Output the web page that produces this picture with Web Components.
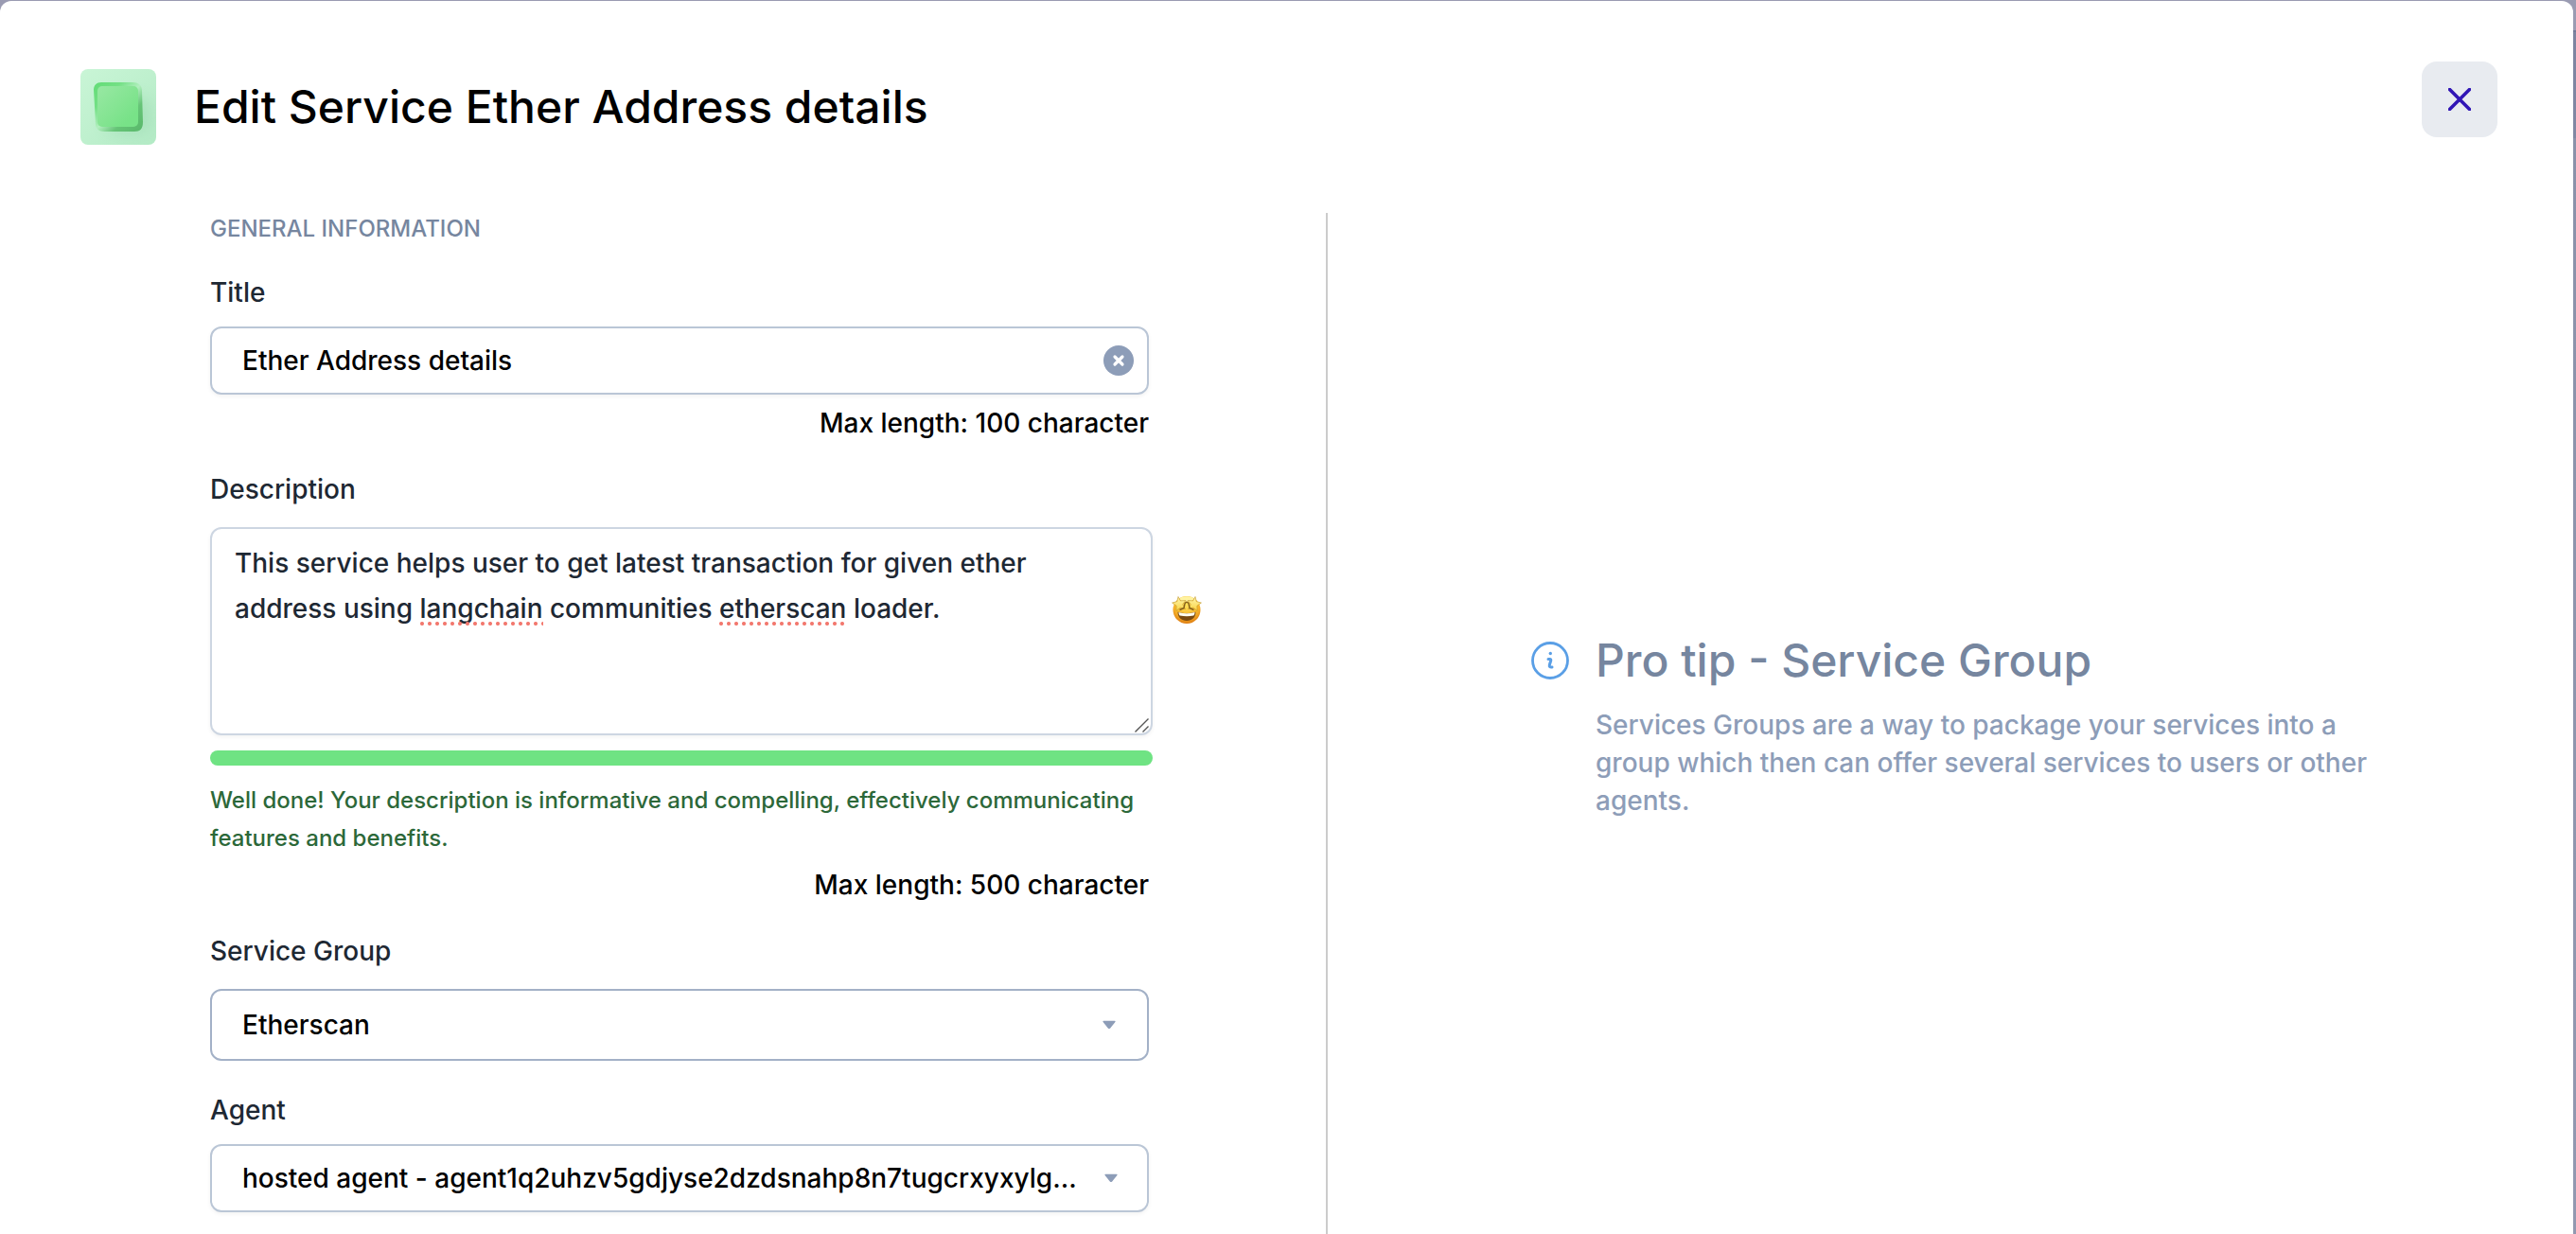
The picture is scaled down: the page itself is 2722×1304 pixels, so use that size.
<!DOCTYPE html>
<html lang="en">
<head>
<meta charset="utf-8">
<title>Edit Service</title>
<style>
  html { background: linear-gradient(#9a9bb2 0, #9a9bb2 32px, #737a97 32px, #737a97 34px, #7d84a0 34px, #8188a3 146px, #8a91a9 146px, #9298b0 100%); }
  body {
    margin: 0;
    min-height: 100vh;
    display: flex;
    font-family: Inter, "Open Sans", sans-serif;
    font-size: 28px;
    font-weight: 500;
    line-height: 40px;
    color: #000;
    --label: #1e2833;
    --muted: #76869f;
    --soft: #8d9db8;
    --line: #bac6d6;
  }
</style>
</head>
<body>
<service-dialog>
  <dialog-header slot="header">Edit Service Ether Address details</dialog-header>
  <service-form slot="form"></service-form>
  <pro-tip slot="tip" heading="Pro tip - Service Group">Services Groups are a way to package your services into a group which then can offer several services to users or other agents.</pro-tip>
</service-dialog>

<template id="dialog-tpl">
  <style>
    :host { flex: 1; display: flex; flex-direction: column; min-width: 0; margin: 1px 3px 0 0; background: #fff; border-radius: 12px 12px 0 0; }
    .body { flex: 1; display: grid; grid-template-columns: 1401fr 1318fr; }
    .tip { display: flex; align-items: center; border-left: 2px solid #ccc; }
  </style>
  <slot name="header"></slot>
  <div class="body">
    <slot name="form"></slot>
    <div class="tip"><slot name="tip"></slot></div>
  </div>
</template>

<template id="header-tpl">
  <style>
    :host { display: flex; align-items: flex-start; justify-content: space-between; padding: 64px 80px 72px 85px; }
    .lead { display: flex; align-items: center; gap: 40px; padding-top: 8px; }
    svg { display: block; }
    h1 { margin: 0; font-size: 48px; line-height: 60px; font-weight: 500; }
    button { width: 80px; height: 80px; padding: 28px; border: 0; border-radius: 16px; background: #e8ebf0; cursor: pointer; }
  </style>
  <div class="lead">
    <svg width="80" height="80" viewBox="0 0 80 80" aria-hidden="true">
      <defs>
        <linearGradient id="bg" x1="0" y1="0" x2="1" y2="1"><stop offset="0" stop-color="#c9f5d6"/><stop offset="1" stop-color="#b4ebc6"/></linearGradient>
        <linearGradient id="rim" x1="0" y1="0" x2="1" y2="1"><stop offset="0" stop-color="#62dc76"/><stop offset=".28" stop-color="#74e085"/><stop offset=".5" stop-color="#b2efbf"/><stop offset=".7" stop-color="#66c477"/><stop offset="1" stop-color="#58b86a"/></linearGradient>
        <linearGradient id="face" x1="0" y1="0" x2="1" y2="1"><stop offset="0" stop-color="#98e8a3"/><stop offset=".8" stop-color="#78e288"/><stop offset="1" stop-color="#78e288"/></linearGradient>
        <filter id="soft" x="-50%" y="-50%" width="200%" height="200%"><feGaussianBlur stdDeviation="8"/></filter>
        <clipPath id="clip"><rect width="80" height="80" rx="8"/></clipPath>
      </defs>
      <g clip-path="url(#clip)">
        <rect width="80" height="80" fill="url(#bg)"/>
        <rect x="28" y="30" width="46" height="38" rx="12" fill="#88cda2" opacity=".35" filter="url(#soft)"/>
        <path d="M22 14h33c6 0 10 3 10 9l1 33c0 7-3 10-9 10H26c-7 0-10-3-10-9L14 22c0-5 3-8 8-8z" fill="url(#rim)"/>
        <rect x="18" y="18" width="43" height="43" rx="5" fill="url(#face)"/>
      </g>
    </svg>
    <h1><slot></slot></h1>
  </div>
  <button type="button" aria-label="Close">
    <svg width="24" height="24" viewBox="0 0 24 24" fill="none" stroke="#3116b5" stroke-width="3.600" stroke-linecap="round"><path d="M1.500 1.500l21 21M22.500 1.500l-21 21"/></svg>
  </button>
</template>

<template id="form-tpl">
  <style>
    :host { display: block; padding: 0 127px 23px 222px; }
    h2 { margin: 0; font-size: 24px; line-height: 34px; font-weight: 500; text-transform: uppercase; color: var(--muted); }
    form { display: flex; flex-direction: column; }
  </style>
  <form>
    <h2>General Information</h2>
    <text-field label="Title" value="Ether Address details" hint="Max length: 100 character"></text-field>
    <description-field label="Description" hint="Max length: 500 character" flagged="langchain etherscan"
      value="This service helps user to get latest transaction for given ether address using langchain communities etherscan loader.">Well done! Your description is informative and compelling, effectively communicating features and benefits.</description-field>
    <select-field label="Service Group" value="Etherscan" tall></select-field>
    <select-field label="Agent" value="hosted agent - agent1q2uhzv5gdjyse2dzdsnahp8n7tugcrxyxylg..."></select-field>
  </form>
</template>

<template id="text-tpl">
  <style>
    :host { display: block; padding: 30px 60px 0 0; }
    label { display: block; color: var(--label); margin-bottom: 16px; }
    .box { display: flex; align-items: center; height: 68px; padding: 0 14px 0 32px; border: 2px solid var(--line); border-radius: 12px; box-shadow: 0 2px 4px #0000000d; }
    input { flex: 1; min-width: 0; border: 0; outline: 0; padding: 0; background: none; font: inherit; color: inherit; }
    button { width: 32px; height: 32px; padding: 0; border: 0; background: none; cursor: pointer; }
    svg { display: block; }
    .hint { margin: 10px 0 0; text-align: right; }
  </style>
  <label for="c"></label>
  <div class="box">
    <input id="c" type="text">
    <button type="button" aria-label="Clear"><svg width="32" height="32" viewBox="0 0 32 32"><circle cx="16" cy="16" r="16" fill="#8d9db8"/><path d="M12 12l8 8M20 12l-8 8" stroke="#fff" stroke-width="3.200" stroke-linecap="round"/></svg></button>
  </div>
  <p class="hint"></p>
</template>

<template id="description-tpl">
  <style>
    :host { display: block; padding-top: 30px; }
    label { display: block; color: var(--label); margin-bottom: 20px; }
    .row { display: flex; align-items: flex-start; gap: 20px; margin-right: 4px; }
    .area { position: relative; flex: 1; display: flex; color: var(--label); }
    textarea { flex: 1; box-sizing: border-box; height: 220px; padding: 12px 24px; border: 2px solid #cdd6e2; border-radius: 12px; background: #fff; box-shadow: 0 2px 4px #0000000d; font: inherit; line-height: 48px; color: inherit; outline: 0; resize: none; }
    .mark { position: absolute; height: 4px; background: radial-gradient(circle at 2px 2px, #f2776d 1.5px, transparent 2.5px) 0 0 / 8px 4px repeat-x; }
    .grip { position: absolute; right: 4px; bottom: 3px; }
    .face { flex: none; margin: 71px 0 0; width: 32px; height: 32px; }
    .rest { margin-right: 56px; }
    progress { display: block; appearance: none; width: 100%; height: 16px; margin-top: 16px; border: 0; border-radius: 8px; overflow: hidden; }
    progress::-webkit-progress-bar { background: #e8ebf0; }
    progress::-webkit-progress-value { background: #6fe383; }
    .note { margin: 17px 0 0; font-size: 24px; color: #2c6839; }
    .hint { margin: 9px 4px 0 0; text-align: right; }
  </style>
  <label for="c"></label>
  <div class="row">
    <div class="area">
      <textarea id="c" spellcheck="false"></textarea>
      <svg class="grip" width="15" height="15" viewBox="0 0 15 15" stroke="#555" stroke-width="1.4"><path d="M.5 14.500L14.500 .5M8.500 14.500l6-6"/></svg>
    </div>
    <svg class="face" viewBox="0 0 32 32" role="img" aria-label="Star-struck">
      <defs>
        <radialGradient id="skin" cx=".5" cy=".3" r=".75"><stop offset="0" stop-color="#ffe45c"/><stop offset=".6" stop-color="#f7b52b"/><stop offset="1" stop-color="#d9720d"/></radialGradient>
        <linearGradient id="star" x1="0" y1="0" x2="0" y2="1"><stop offset="0" stop-color="#fff6ae"/><stop offset="1" stop-color="#f8d443"/></linearGradient>
      </defs>
      <circle cx="16" cy="16.500" r="14.500" fill="url(#skin)"/>
      <ellipse cx="16" cy="5" rx="7.500" ry="2.800" fill="#fff3a0"/>
      <path d="M6.500 18.500c6 2 13 2 19 0 0 6-4 9.500-9.500 9.500s-9.500-3.500-9.500-9.500z" fill="#7a4a10"/>
      <path d="M7.500 19c6 1.600 11 1.600 17 0 0 2-.6 3-1.200 3.600-5 1-9.600 1-14.600 0C8 22 7.500 21 7.500 19z" fill="#fffdf0"/>
      <g fill="url(#star)" stroke="#c09428" stroke-width=".6" stroke-linejoin="round">
        <path d="M7 2.500l2.400 4.400 5.400-.4-3 4.200 2.600 5-5.200-1.500-4.300 3.300.2-5.300L.6 9l5.200-1.400z"/>
        <path d="M25 2.500l-2.400 4.400-5.400-.4 3 4.200-2.600 5 5.200-1.500 4.300 3.300-.2-5.300 4.500-3.200-5.200-1.400z"/>
      </g>
      <path d="M8.500 16.500l4.500-2 1-4.700q2-3 4 0l1 4.700 4.500 2" fill="none" stroke="#85601a" stroke-width="1.400" stroke-linejoin="round"/>
    </svg>
  </div>
  <div class="rest">
    <progress max="100" value="100" aria-label="Description quality"></progress>
    <p class="note"><slot></slot></p>
    <p class="hint"></p>
  </div>
</template>

<template id="select-tpl">
  <style>
    :host { display: block; padding: 32px 60px 0 0; }
    :host([tall]) { padding-top: 30px; }
    label { display: block; color: var(--label); margin-bottom: 16px; }
    :host([tall]) label { margin-bottom: 20px; }
    .box { display: grid; align-items: center; }
    select { grid-area: 1 / 1; appearance: none; width: 100%; height: 72px; padding: 0 64px 0 32px; border: 2px solid var(--line); border-radius: 12px; background: #fff; box-shadow: 0 2px 4px #0000000d; font: inherit; color: #000; outline: 0; text-overflow: ellipsis; }
    :host([tall]) select { height: 76px; border-color: #a3b1c7; box-shadow: none; }
    svg { grid-area: 1 / 1; justify-self: end; margin-right: 32px; pointer-events: none; }
    :host([tall]) svg { margin-right: 34px; }
  </style>
  <label for="c"></label>
  <div class="box">
    <select id="c"></select>
    <svg width="16" height="10" viewBox="0 0 16 10"><path d="M2.200 .8h11.600q1.500 0 .6 1.300L9.200 8.400q-1.200 1.200-2.400 0L1.600 2.100Q.7 .8 2.200 .8z" fill="#8d9db8"/></svg>
  </div>
</template>

<template id="tip-tpl">
  <style>
    :host { display: flex; gap: 28px; flex: 1; padding: 5px 180px 0 215px; color: var(--soft); }
    svg { flex: none; margin-top: 10px; }
    h2 { margin: 0 0 18px; font-size: 48px; line-height: 60px; font-weight: 500; color: var(--muted); }
    p { margin: 0; }
  </style>
  <svg width="40" height="40" viewBox="0 0 40 40" fill="none" stroke="#5a9fe6" aria-hidden="true">
    <circle cx="20" cy="20" r="18.500" stroke-width="2.800"/>
    <path d="M18 18.500h1.500q1.700 0 1.200 1.800l-1.400 4.500q-.6 2.700 2.700 2.200" stroke-width="3" stroke-linecap="round" stroke-linejoin="round"/>
    <circle cx="20.300" cy="12.500" r="1.700" fill="#5a9fe6" stroke="none"/>
  </svg>
  <div>
    <h2></h2>
    <p><slot></slot></p>
  </div>
</template>

<script>
  class TemplateElement extends HTMLElement {
    constructor() {
      super();
      this.attachShadow({ mode: 'open' })
        .append(document.getElementById(this.constructor.template).content.cloneNode(true));
    }
    $(selector) { return this.shadowRoot.querySelector(selector); }
  }

  class ServiceDialog extends TemplateElement { static template = 'dialog-tpl'; }
  class DialogHeader extends TemplateElement { static template = 'header-tpl'; }
  class ServiceForm extends TemplateElement { static template = 'form-tpl'; }

  class TextField extends TemplateElement {
    static template = 'text-tpl';
    connectedCallback() {
      this.$('label').textContent = this.getAttribute('label');
      this.$('.hint').textContent = this.getAttribute('hint');
      this.$('input').value = this.getAttribute('value');
      this.$('button').onclick = () => { this.$('input').value = ''; };
    }
  }

  class DescriptionField extends TemplateElement {
    static template = 'description-tpl';
    connectedCallback() {
      this.$('label').textContent = this.getAttribute('label');
      this.$('.hint').textContent = this.getAttribute('hint');
      this.$('textarea').value = this.getAttribute('value');
      this.$('textarea').oninput = () => this.mark();
      new ResizeObserver(() => this.mark()).observe(this.$('textarea'));
      requestAnimationFrame(() => this.mark());
    }
    // Underlines each flagged word with a dotted mark laid over the text box.
    mark() {
      const area = this.$('textarea');
      const style = getComputedStyle(area);
      const pen = document.createElement('canvas').getContext('2d');
      pen.font = `${style.fontWeight} ${style.fontSize} ${style.fontFamily}`;
      const room = area.clientWidth - parseFloat(style.paddingLeft) - parseFloat(style.paddingRight);
      const flagged = this.getAttribute('flagged').split(' ');
      this.shadowRoot.querySelectorAll('.mark').forEach(m => m.remove());
      let line = '', row = 0;
      for (const word of area.value.split(' ')) {
        if (line && pen.measureText(line + word).width > room) { line = ''; row++; }
        if (flagged.includes(word)) {
          const m = document.createElement('span');
          m.className = 'mark';
          m.style.left = `${Math.round(26 + pen.measureText(line).width)}px`;
          m.style.top = `${14 + row * 48 + 38}px`;
          m.style.width = `${Math.round(pen.measureText(word).width)}px`;
          this.$('.area').append(m);
        }
        line += word + ' ';
      }
    }
  }

  class SelectField extends TemplateElement {
    static template = 'select-tpl';
    connectedCallback() {
      this.$('label').textContent = this.getAttribute('label');
      this.$('select').replaceChildren(new Option(this.getAttribute('value')));
    }
  }

  class ProTip extends TemplateElement {
    static template = 'tip-tpl';
    connectedCallback() { this.$('h2').textContent = this.getAttribute('heading'); }
  }

  customElements.define('text-field', TextField);
  customElements.define('description-field', DescriptionField);
  customElements.define('select-field', SelectField);
  customElements.define('pro-tip', ProTip);
  customElements.define('dialog-header', DialogHeader);
  customElements.define('service-form', ServiceForm);
  customElements.define('service-dialog', ServiceDialog);
</script>
</body>
</html>
